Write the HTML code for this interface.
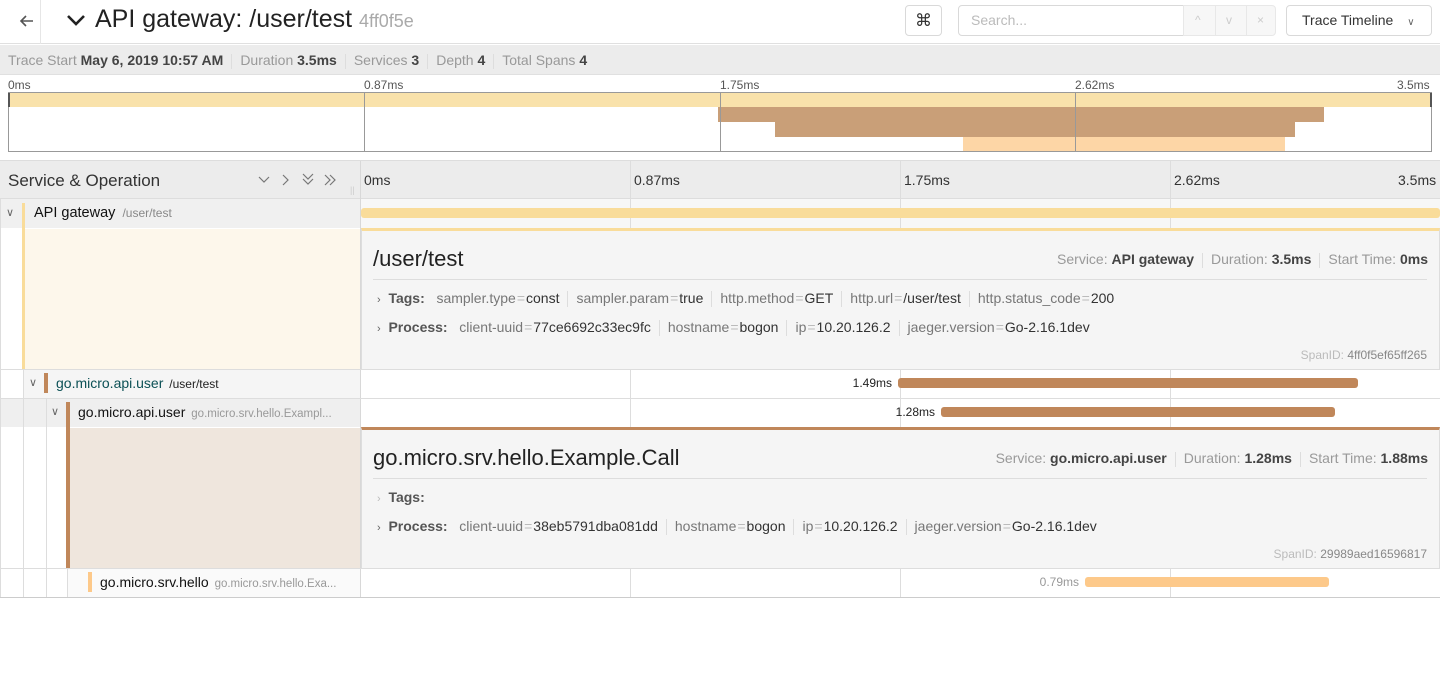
<!DOCTYPE html>
<html><head><meta charset="utf-8"><style>
*{box-sizing:border-box;margin:0;padding:0}
body{width:1440px;height:696px;overflow:hidden;background:#fff;font-family:"Liberation Sans",Arial,sans-serif;color:#333;position:relative}
.a{position:absolute;white-space:nowrap}
.vl{position:absolute;width:1px;background:#ddd}
.hl{position:absolute;height:1px;background:#ddd}
.kv{font-size:14px;color:#333}
.kv .k{color:#777}
.kv .e{color:#bbb;margin:0 1px}
.kv .s{display:inline-block;width:1px;height:16px;background:#ddd;vertical-align:middle;margin:0 8px}
.kv b{color:#555}
.chev{color:#666;font-size:11px}
.sep{display:inline-block;width:1px;height:15px;background:#ddd;margin:0 8px;vertical-align:middle}
.ml{position:absolute;top:78px;font-size:12px;color:#555}
</style></head><body>
<!-- header -->
<div class="a" style="left:0;top:0;width:1440px;height:44px;border-bottom:1px solid #e0e0e0"></div>
<div class="vl" style="left:40px;top:0;height:44px;background:#e6e6e6"></div>
<svg class="a" style="left:18px;top:12px" width="18" height="18" viewBox="0 0 18 18"><path d="M15 9H3M8 4L3 9l5 5" stroke="#555" stroke-width="1.6" fill="none"/></svg>
<svg class="a" style="left:66px;top:12px" width="20" height="16" viewBox="0 0 20 16"><path d="M2 4l8 8 8-8" stroke="#222" stroke-width="2.6" fill="none"/></svg>
<div class="a" style="left:95px;top:5px;font-size:25px;color:#222">API gateway: /user/test <span style="font-size:18px;color:#aaa">4ff0f5e</span></div>
<div class="a" style="left:905px;top:5px;width:37px;height:31px;border:1px solid #d9d9d9;border-radius:4px;text-align:center;line-height:29px;font-size:17px">⌘</div>
<div class="a" style="left:958px;top:5px;width:226px;height:31px;border:1px solid #d9d9d9;border-radius:4px 0 0 4px;padding-left:12px;line-height:29px;font-size:14px;color:#bbb">Search...</div>
<div class="a" style="left:1183px;top:5px;width:93px;height:31px;border:1px solid #e8e8e8;background:#f7f7f7;border-radius:0 4px 4px 0;font-size:12px;color:#ccc;line-height:29px"><span style="position:absolute;left:11px">^</span><span style="position:absolute;left:42px">v</span><span style="position:absolute;left:73px">×</span></div>
<div class="vl" style="left:1215px;top:6px;height:29px;background:#e8e8e8"></div><div class="vl" style="left:1246px;top:6px;height:29px;background:#e8e8e8"></div>
<div class="a" style="left:1286px;top:5px;width:146px;height:31px;border:1px solid #d9d9d9;border-radius:4px;padding-left:15px;line-height:29px;font-size:14px;color:#333">Trace Timeline <span style="font-size:10px;color:#666;margin-left:10px">∨</span></div>
<!-- summary -->
<div class="a" style="left:0;top:45px;width:1440px;height:30px;background:#ececec;border-bottom:1px solid #e0e0e0"></div>
<div class="a" style="left:8px;top:52px;font-size:14px;color:#999">Trace Start <b style="color:#444">May 6, 2019 10:57 AM</b><span class="sep"></span>Duration <b style="color:#444">3.5ms</b><span class="sep"></span>Services <b style="color:#444">3</b><span class="sep"></span>Depth <b style="color:#444">4</b><span class="sep"></span>Total Spans <b style="color:#444">4</b></div>
<!-- minimap -->
<div class="ml" style="left:8px">0ms</div>
<div class="ml" style="left:364px">0.87ms</div>
<div class="ml" style="left:720px">1.75ms</div>
<div class="ml" style="left:1075px">2.62ms</div>
<div class="ml" style="left:1397px">3.5ms</div>
<div class="a" style="left:8px;top:92px;width:1424px;height:60px;border:1px solid #999;background:#fff"></div>
<div class="a" style="left:9px;top:93px;width:1422px;height:14px;background:#f9e2ab"></div>
<div class="a" style="left:718px;top:107px;width:606px;height:15px;background:#c99f78"></div>
<div class="a" style="left:775px;top:122px;width:520px;height:15px;background:#c99f78"></div>
<div class="a" style="left:963px;top:137px;width:322px;height:14px;background:#fdd6a6"></div>
<div class="vl" style="left:364px;top:93px;height:58px;background:#999"></div>
<div class="vl" style="left:720px;top:93px;height:58px;background:#999"></div>
<div class="vl" style="left:1075px;top:93px;height:58px;background:#999"></div>
<div class="a" style="left:8px;top:93px;width:2px;height:14px;background:#555"></div>
<div class="a" style="left:1430px;top:93px;width:2px;height:14px;background:#555"></div>
<!-- column header -->
<div class="a" style="left:0;top:160px;width:1440px;height:39px;background:#ececec;border-top:1px solid #ddd;border-bottom:1px solid #ddd"></div>
<div class="a" style="left:8px;top:171px;font-size:17px;color:#333">Service &amp; Operation</div>
<svg class="a" style="left:256px;top:173px" width="84" height="14" viewBox="0 0 84 14"><g stroke="#777" stroke-width="1.2" fill="none"><path d="M3 4l5 5 5-5"/><path d="M27 2l5 5-5 5"/><path d="M47 1l5 5 5-5M47 6l5 5 5-5"/><path d="M69 2l5 5-5 5M74 2l5 5-5 5"/></g></svg>
<div class="a" style="left:350px;top:185px;font-size:9px;color:#ccc">||</div>
<div class="vl" style="left:360px;top:161px;height:436px;background:#d8d8d8"></div>
<div class="a" style="left:364px;top:172px;font-size:14px">0ms</div>
<div class="a" style="left:634px;top:172px;font-size:14px">0.87ms</div>
<div class="a" style="left:904px;top:172px;font-size:14px">1.75ms</div>
<div class="a" style="left:1174px;top:172px;font-size:14px">2.62ms</div>
<div class="a" style="left:1398px;top:172px;font-size:14px">3.5ms</div>
<div class="vl" style="left:630px;top:161px;height:37px"></div><div class="vl" style="left:900px;top:161px;height:37px"></div><div class="vl" style="left:1170px;top:161px;height:37px"></div>
<!-- row1 -->
<div class="a" style="left:0;top:199px;width:360px;height:29px;background:#f0f0f0"></div>
<div class="a" style="left:361px;top:199px;width:1079px;height:29px;background:#f7f7f7"></div>
<div class="vl" style="left:630px;top:199px;height:29px"></div><div class="vl" style="left:900px;top:199px;height:29px"></div><div class="vl" style="left:1170px;top:199px;height:29px"></div>
<div class="a chev" style="left:6px;top:206px">∨</div>
<div class="a" style="left:22px;top:203px;width:3px;height:166px;background:#f9dc9a"></div>
<div class="a" style="left:34px;top:205px;font-size:14.5px;color:#111">API gateway <span style="font-size:12px;color:#888;margin-left:3px">/user/test</span></div>
<div class="a" style="left:361px;top:208px;width:1079px;height:10px;background:#f9dc9a;border-radius:3px"></div>
<!-- detail1 -->
<div class="a" style="left:25px;top:229px;width:335px;height:140px;background:#fdf7eb"></div>
<div class="a" style="left:361px;top:228px;width:1079px;height:141px;background:#f5f5f5;border-top:3px solid #f9dc9a;border-left:1px solid #ddd;border-right:1px solid #ddd"></div>
<div class="a" style="left:373px;top:246px;font-size:22px;color:#222">/user/test</div>
<div class="a" style="right:12px;top:251px;font-size:14px;color:#999">Service: <b style="color:#444">API gateway</b><span class="sep"></span>Duration: <b style="color:#444">3.5ms</b><span class="sep"></span>Start Time: <b style="color:#444">0ms</b></div>
<div class="hl" style="left:373px;top:279px;width:1054px"></div>
<div class="a kv" style="left:377px;top:290px"><span class="chev">›</span>&nbsp; <b>Tags:</b>&nbsp;&nbsp; <span class="k">sampler.type</span><span class="e">=</span>const<span class="s"></span><span class="k">sampler.param</span><span class="e">=</span>true<span class="s"></span><span class="k">http.method</span><span class="e">=</span>GET<span class="s"></span><span class="k">http.url</span><span class="e">=</span>/user/test<span class="s"></span><span class="k">http.status_code</span><span class="e">=</span>200</div>
<div class="a kv" style="left:377px;top:319px"><span class="chev">›</span>&nbsp; <b>Process:</b>&nbsp;&nbsp; <span class="k">client-uuid</span><span class="e">=</span>77ce6692c33ec9fc<span class="s"></span><span class="k">hostname</span><span class="e">=</span>bogon<span class="s"></span><span class="k">ip</span><span class="e">=</span>10.20.126.2<span class="s"></span><span class="k">jaeger.version</span><span class="e">=</span>Go-2.16.1dev</div>
<div class="a" style="right:13px;top:348px;font-size:12px;color:#bbb">SpanID: <span style="color:#888">4ff0f5ef65ff265</span></div>
<!-- row2 -->
<div class="hl" style="left:0;top:369px;width:1440px"></div>
<div class="a" style="left:24px;top:370px;width:336px;height:28px;background:#f5f5f5"></div>
<div class="vl" style="left:23px;top:370px;height:227px"></div>
<div class="a chev" style="left:29px;top:376px">∨</div>
<div class="a" style="left:44px;top:373px;width:4px;height:20px;background:#c0875a"></div>
<div class="a" style="left:56px;top:375px;font-size:14px;color:#0b5055">go.micro.api.user <span style="font-size:12px;color:#222;margin-left:2px">/user/test</span></div>
<div class="vl" style="left:630px;top:370px;height:57px"></div><div class="vl" style="left:900px;top:370px;height:57px"></div><div class="vl" style="left:1170px;top:370px;height:57px"></div>
<div class="a" style="right:548px;top:376px;font-size:12px;color:#222">1.49ms</div>
<div class="a" style="left:898px;top:378px;width:460px;height:10px;background:#c0875a;border-radius:3px"></div>
<!-- row3 -->
<div class="hl" style="left:0;top:398px;width:1440px"></div>
<div class="a" style="left:0;top:399px;width:360px;height:28px;background:#efefef"></div>
<div class="vl" style="left:23px;top:399px;height:28px"></div>
<div class="vl" style="left:46px;top:399px;height:198px"></div>
<div class="a chev" style="left:51px;top:405px">∨</div>
<div class="a" style="left:66px;top:402px;width:4px;height:166px;background:#c0875a"></div>
<div class="a" style="left:78px;top:404px;font-size:14px;color:#111">go.micro.api.user <span style="font-size:11.5px;color:#999;margin-left:2px">go.micro.srv.hello.Exampl...</span></div>
<div class="a" style="right:505px;top:405px;font-size:12px;color:#222">1.28ms</div>
<div class="a" style="left:941px;top:407px;width:394px;height:10px;background:#c0875a;border-radius:3px"></div>
<!-- detail2 -->
<div class="a" style="left:70px;top:428px;width:290px;height:140px;background:#efe6dd"></div>
<div class="a" style="left:361px;top:427px;width:1079px;height:141px;background:#f5f5f5;border-top:3px solid #c0875a;border-left:1px solid #ddd;border-right:1px solid #ddd"></div>
<div class="a" style="left:373px;top:445px;font-size:22px;color:#222">go.micro.srv.hello.Example.Call</div>
<div class="a" style="right:12px;top:450px;font-size:14px;color:#999">Service: <b style="color:#444">go.micro.api.user</b><span class="sep"></span>Duration: <b style="color:#444">1.28ms</b><span class="sep"></span>Start Time: <b style="color:#444">1.88ms</b></div>
<div class="hl" style="left:373px;top:478px;width:1054px"></div>
<div class="a kv" style="left:377px;top:489px"><span class="chev" style="color:#bbb">›</span>&nbsp; <b>Tags:</b></div>
<div class="a kv" style="left:377px;top:518px"><span class="chev">›</span>&nbsp; <b>Process:</b>&nbsp;&nbsp; <span class="k">client-uuid</span><span class="e">=</span>38eb5791dba081dd<span class="s"></span><span class="k">hostname</span><span class="e">=</span>bogon<span class="s"></span><span class="k">ip</span><span class="e">=</span>10.20.126.2<span class="s"></span><span class="k">jaeger.version</span><span class="e">=</span>Go-2.16.1dev</div>
<div class="a" style="right:13px;top:547px;font-size:12px;color:#bbb">SpanID: <span style="color:#888">29989aed16596817</span></div>
<!-- row4 -->
<div class="hl" style="left:0;top:568px;width:1440px"></div>
<div class="a" style="left:68px;top:569px;width:292px;height:28px;background:#fafafa"></div>
<div class="vl" style="left:67px;top:569px;height:28px"></div>
<div class="a" style="left:88px;top:572px;width:4px;height:20px;background:#fdc98a"></div>
<div class="a" style="left:100px;top:574px;font-size:14px;color:#111">go.micro.srv.hello <span style="font-size:11.5px;color:#999;margin-left:2px">go.micro.srv.hello.Exa...</span></div>
<div class="vl" style="left:630px;top:569px;height:28px"></div><div class="vl" style="left:900px;top:569px;height:28px"></div><div class="vl" style="left:1170px;top:569px;height:28px"></div>
<div class="a" style="right:361px;top:575px;font-size:12px;color:#999">0.79ms</div>
<div class="a" style="left:1085px;top:577px;width:244px;height:10px;background:#fdc98a;border-radius:3px"></div>
<div class="hl" style="left:0;top:597px;width:1440px;background:#ccc"></div>
<div class="vl" style="left:0;top:199px;height:398px"></div>
</body></html>
